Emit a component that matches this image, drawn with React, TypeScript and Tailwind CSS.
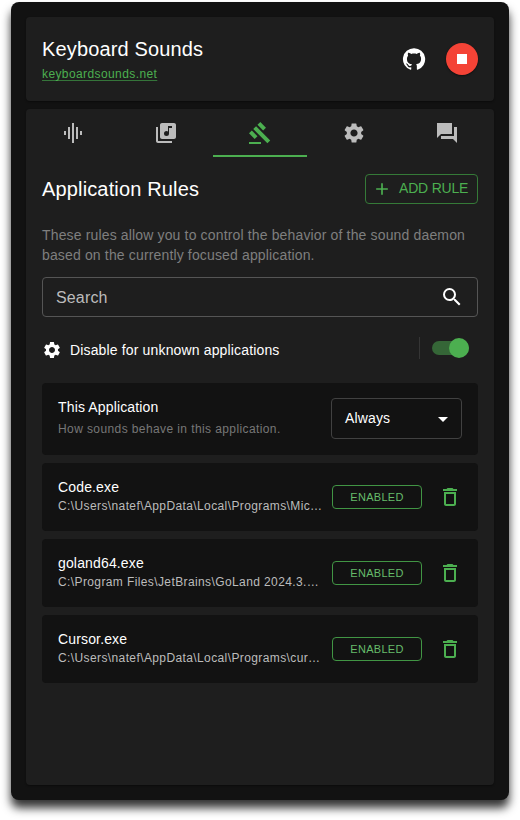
import type { ReactNode } from "react";
import {
  MdAdd,
  MdArrowDropDown,
  MdGavel,
  MdGraphicEq,
  MdLibraryMusic,
  MdSearch,
  MdSettings,
  MdStop,
} from "react-icons/md";

function GitHubIcon() {
  return (
    <svg viewBox="0 0 24 24" className="size-6" fill="currentColor">
      <path d="M12 1.27a11 11 0 00-3.48 21.46c.55.09.73-.28.73-.55v-1.84c-3.03.64-3.67-1.46-3.67-1.46-.55-1.29-1.28-1.65-1.28-1.65-.92-.65.1-.65.1-.65 1.1 0 1.73 1.1 1.73 1.1.92 1.65 2.57 1.2 3.21.92a2 2 0 01.64-1.47c-2.47-.27-5.04-1.19-5.04-5.5 0-1.1.46-2.1 1.2-2.84a3.76 3.76 0 010-2.93s.91-.28 3.11 1.1c1.8-.49 3.7-.49 5.5 0 2.1-1.38 3.02-1.1 3.02-1.1a3.76 3.76 0 01.1 2.93c.83.74 1.2 1.74 1.2 2.94 0 4.21-2.57 5.13-5.04 5.4.45.37.82.92.82 2.02v3.03c0 .27.1.64.73.55A11 11 0 0012 1.27" />
    </svg>
  );
}

function ForumIcon() {
  return (
    <svg viewBox="0 0 24 24" className="size-6" fill="currentColor">
      <path d="M22 6h-3v9H6v3h12l4 4V6zm-5 7V2H2v15l4-4h11z" />
    </svg>
  );
}

function TrashIcon() {
  return (
    <svg viewBox="0 0 24 24" className="size-6" fill="currentColor">
      <path d="M6 19c0 1.1.9 2 2 2h8c1.1 0 2-.9 2-2V7H6v12zM8 9h8v10H8V9zm7.500-5l-1-1h-5l-1 1H5v2h14V4h-3.500z" />
    </svg>
  );
}

function Tab({ active, children }: { active?: boolean; children: ReactNode }) {
  return (
    <button
      className={
        active
          ? "flex h-12 flex-1 items-center justify-center border-b-2 border-[#4caf50] pt-0.5 text-[#4caf50]"
          : "flex h-12 flex-1 items-center justify-center text-[#bcbcbc]"
      }
    >
      {children}
    </button>
  );
}

const rules = [
  { name: "Code.exe", path: "C:\\Users\\natef\\AppData\\Local\\Programs\\Mic…" },
  { name: "goland64.exe", path: "C:\\Program Files\\JetBrains\\GoLand 2024.3.…" },
  { name: "Cursor.exe", path: "C:\\Users\\natef\\AppData\\Local\\Programs\\cur…" },
];

function RuleRow({ name, path }: { name: string; path: string }) {
  return (
    <div className="flex h-[68px] items-center rounded bg-[#121212] px-4">
      <div className="w-[268px] shrink-0 pb-0.5">
        <p className="text-[14px] leading-5 tracking-[0.15px] text-white">{name}</p>
        <p className="text-[12px] leading-[18px] tracking-[0.39px] whitespace-nowrap text-[#bcbcbc]">{path}</p>
      </div>
      <button className="ml-1.5 h-6 w-[90px] shrink-0 rounded border border-[#419544] text-[11px] leading-[22px] tracking-[0.3px] text-[#66bb6a]">
        ENABLED
      </button>
      <button className="ml-4 text-[#4caf50]">
        <TrashIcon />
      </button>
    </div>
  );
}

export default function App() {
  return (
    <div className="h-[820px] w-[520px] overflow-hidden bg-white pt-0.5 pl-[11px] font-['Liberation_Sans',Arial,sans-serif]">
      <div className="flex h-[798px] w-[498px] flex-col gap-2 rounded-[8px] bg-[#121212] p-[15px] shadow-[0_8px_10px_0_rgba(0,0,0,0.8)]">
        <header className="flex h-[84px] shrink-0 items-center justify-between rounded bg-[#1e1e1e] px-4 shadow-[0_1px_2px_rgba(0,0,0,0.4)]">
          <div className="pb-0.5">
            <h1 className="text-[20px] leading-8 tracking-[0.15px] text-white">Keyboard Sounds</h1>
            <a className="block text-[12px] leading-[18px] tracking-[0.4px] text-[#4caf50] underline decoration-[#35743a] underline-offset-2">
              keyboardsounds.net
            </a>
          </div>
          <div className="flex items-center gap-5 text-white">
            <GitHubIcon />
            <button className="flex size-8 items-center justify-center rounded-full bg-[#f44336] shadow-[0_1px_2px_rgba(0,0,0,0.5)]">
              <MdStop className="size-5" />
            </button>
          </div>
        </header>

        <main className="min-h-0 flex-1 rounded bg-[#1e1e1e] shadow-[0_1px_2px_rgba(0,0,0,0.4)]">
          <nav className="flex">
            <Tab><MdGraphicEq className="size-6" /></Tab>
            <Tab><MdLibraryMusic className="size-6" /></Tab>
            <Tab active><MdGavel className="size-6" /></Tab>
            <Tab><MdSettings className="size-6" /></Tab>
            <Tab><ForumIcon /></Tab>
          </nav>

          <div className="px-4 pt-4">
            <div className="flex items-center justify-between">
              <h2 className="text-[20px] leading-8 tracking-[0.15px] text-white">Application Rules</h2>
              <button className="flex h-[30px] w-[113px] items-center rounded border border-[#357a38] pl-1.5 text-[14px] whitespace-nowrap text-[#4caf50]">
                <MdAdd className="mr-[7px] size-5" />
                <span className="pb-0.5 tracking-[-0.2px]">ADD RULE</span>
              </button>
            </div>

            <p className="mt-5 text-[14px] leading-5 tracking-[0.15px] text-[#7f7f7f]">
              These rules allow you to control the behavior of the sound daemon based on the currently focused application.
            </p>

            <div className="mt-3 flex h-10 items-center justify-between rounded border border-[#555555] pr-[13px] pl-[13px] text-[16px] tracking-[0.15px] text-[#bcbcbc]">
              <span className="pt-px">Search</span>
              <MdSearch className="size-6 text-white" />
            </div>

            <div className="mt-4 flex h-[34px] items-center">
              <MdSettings className="size-5 text-white" />
              <span className="ml-2 text-[14px] tracking-[0.15px] text-white">Disable for unknown applications</span>
              <div className="mb-1 ml-auto h-[22px] w-px bg-[#353535]" />
              <div className="mr-[9px] mb-1 ml-3 flex h-[14px] w-[37px] items-center justify-end rounded-full bg-[#356637]">
                <div className="size-5 shrink-0 rounded-full bg-[#4caf50]" />
              </div>
            </div>

            <div className="mt-4 flex flex-col gap-2">
              <div className="flex h-[72px] items-center justify-between rounded bg-[#121212] px-4">
                <div className="pb-[3px]">
                  <p className="text-[14px] leading-6 tracking-[0.15px] text-white">This Application</p>
                  <p className="text-[12px] leading-[21px] tracking-[0.4px] text-[#777777]">How sounds behave in this application.</p>
                </div>
                <button className="mb-0.5 flex h-[41px] w-[131px] items-center justify-between rounded border border-[#414141] pr-1.5 pl-[13px] text-[14px] tracking-[0.15px] text-white">
                  <span>Always</span>
                  <MdArrowDropDown className="mt-0.5 size-6" />
                </button>
              </div>
              {rules.map((rule) => (
                <RuleRow key={rule.name} name={rule.name} path={rule.path} />
              ))}
            </div>
          </div>
        </main>
      </div>
    </div>
  );
}
